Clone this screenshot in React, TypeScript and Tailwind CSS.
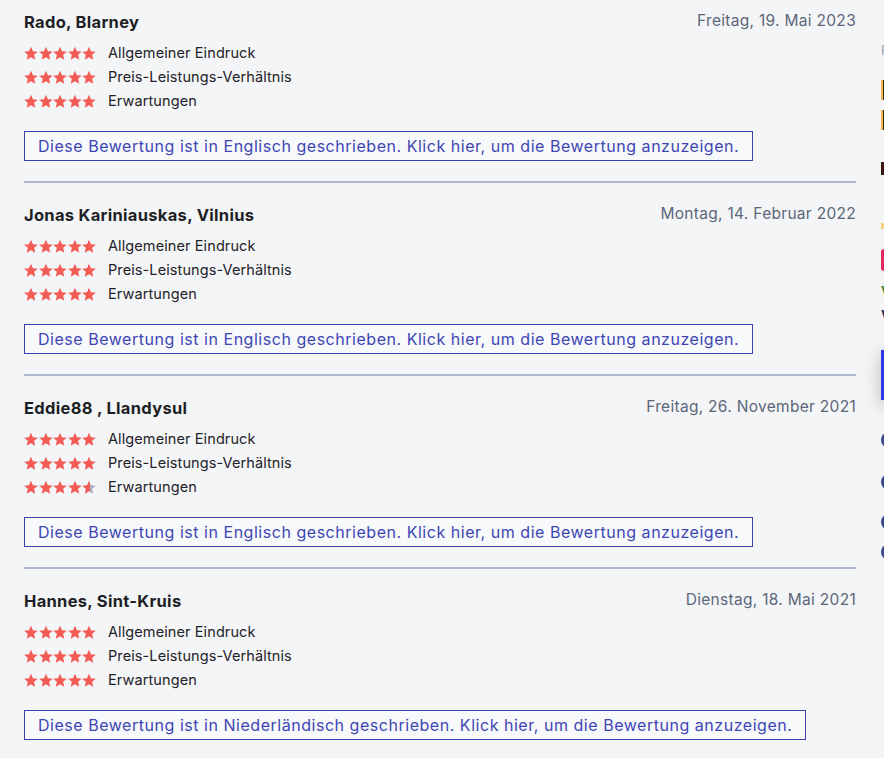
import React from 'react';

interface Review {
  name: string;
  date: string;
  ratings: number[];
  language: string;
}

const reviews: Review[] = [
  { name: 'Rado, Blarney', date: 'Freitag, 19. Mai 2023', ratings: [5, 5, 5], language: 'Englisch' },
  { name: 'Jonas Kariniauskas, Vilnius', date: 'Montag, 14. Februar 2022', ratings: [5, 5, 5], language: 'Englisch' },
  { name: 'Eddie88 , Llandysul', date: 'Freitag, 26. November 2021', ratings: [5, 5, 4.5], language: 'Englisch' },
  { name: 'Hannes, Sint-Kruis', date: 'Dienstag, 18. Mai 2021', ratings: [5, 5, 5], language: 'Niederländisch' },
];

const labels = ['Allgemeiner Eindruck', 'Preis-Leistungs-Verhältnis', 'Erwartungen'];

const STAR = 'M7 0.6l1.95 4.6 4.95.42-3.76 3.26 1.13 4.86L7 11.15 2.73 13.74l1.13-4.86L.1 5.62l4.95-.42z';

function Star({ fill, id }: { fill: number; id: string }) {
  return (
    <svg width="14" height="14" viewBox="0 0 14 14" className="block">
      {fill > 0 && fill < 1 && (
        <defs>
          <linearGradient id={id}>
            <stop offset="55%" stopColor="#f35b55" />
            <stop offset="55%" stopColor="#a9b0c2" />
          </linearGradient>
        </defs>
      )}
      <path d={STAR} fill={fill >= 1 ? '#f35b55' : fill > 0 ? `url(#${id})` : '#a9b0c2'} />
    </svg>
  );
}

function Stars({ value, uid }: { value: number; uid: string }) {
  return (
    <div className="flex gap-[0.6px] w-[72px]">
      {[0, 1, 2, 3, 4].map((i) => (
        <Star key={i} id={`${uid}-${i}`} fill={Math.max(0, Math.min(1, value - i))} />
      ))}
    </div>
  );
}

function ReviewItem({ review, index, last }: { review: Review; index: number; last: boolean }) {
  return (
    <div className={last ? 'pb-5' : 'pb-[20px] border-b-2 border-[#aeb7ce] mb-5'}>
      <div className="flex items-start justify-between h-6">
        <h3 className="text-[16.5px] font-bold text-[#1d1f24] leading-6 tracking-[0.3px]">{review.name}</h3>
        <span className="text-[15.5px] text-[#5c6679] leading-6 -mt-[1px] tracking-[0.3px]">{review.date}</span>
      </div>
      <div className="mt-[7px]">
        {review.ratings.map((r, i) => (
          <div key={i} className="flex items-center h-6">
            <Stars value={r} uid={`s${index}-${i}`} />
            <span className="ml-3 text-[14.5px] text-[#1f2228] tracking-[0.1px]">{labels[i]}</span>
          </div>
        ))}
      </div>
      <button className="mt-[18px] h-[30px] px-[13px] border border-[#3a43b3] bg-[#f8f9fa] text-[16px] text-[#3d46b5] leading-none tracking-[0.53px]">
        Diese Bewertung ist in {review.language} geschrieben. Klick hier, um die Bewertung anzuzeigen.
      </button>
    </div>
  );
}

export default function App() {
  return (
    <div
      className="w-[884px] h-[758px] overflow-hidden bg-[#f4f5f7] flex"
      style={{ fontFamily: 'Inter, "Open Sans", sans-serif' }}
    >
      {/* Reviews list */}
      <div className="w-[832px] ml-6 shrink-0 pt-[10px]">
        {reviews.map((r, i) => (
          <ReviewItem key={i} review={r} index={i} last={i === reviews.length - 1} />
        ))}
      </div>

      {/* Sidebar, clipped at the edge */}
      <div className="ml-[25px] w-[200px] shrink-0 pt-[42px]">
        <div className="text-[13px] text-[#9aa3b5] leading-4">Preis</div>
        <div className="mt-[22px] w-[3px] h-[20px] bg-[#3a2a10] border-l-2 border-[#f0b450]" />
        <div className="mt-[10px] w-[3px] h-[20px] bg-[#3a2a10] border-l-2 border-[#f0b450]" />
        <div className="mt-[32px] w-[3px] h-[13px] bg-[#3a1a10] border-b border-[#222]" />
        <div className="mt-[48px] w-[3px] h-[6px] bg-[#f5d07a]" />
        <div className="mt-[20px] w-[4px] h-[22px] rounded-l-[3px] bg-[#e22a5c]" />
        <div className="mt-[12px] text-[13px] font-bold text-[#3a8a3a] leading-4">V</div>
        <div className="mt-[8px] text-[13px] font-bold text-[#1e2a55] leading-4">V</div>
        <div className="mt-[27px] w-[200px] h-[50px] bg-[#2f37e6] shadow-[0_4px_18px_rgba(0,0,0,0.25)]" />
        <div className="mt-[32px] w-[16px] h-[16px] rounded-full bg-[#3a4a8a]" />
        <div className="mt-[26px] w-[16px] h-[16px] rounded-full bg-[#3a4a8a]" />
        <div className="mt-[24px] w-[16px] h-[16px] rounded-full bg-[#3a4a8a]" />
        <div className="mt-[14px] w-[16px] h-[16px] rounded-full bg-[#3a4a8a]" />
      </div>
    </div>
  );
}
